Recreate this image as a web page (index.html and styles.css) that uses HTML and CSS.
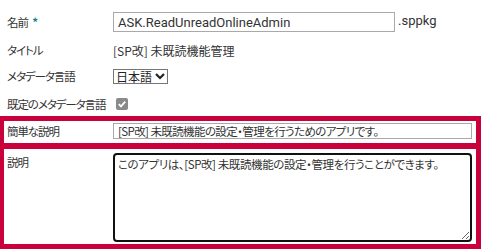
FILE: index.html
```html
<!DOCTYPE html>
<html lang="ja">
<head>
<meta charset="utf-8">
<link rel="stylesheet" href="styles.css">
</head>
<body>
<div class="form">
  <div class="row row-name">
    <div class="label">名前 <span class="req">*</span></div>
    <div class="field">
      <input class="text name-input" type="text" value="ASK.ReadUnreadOnlineAdmin">
      <span class="ext">.sppkg</span>
    </div>
  </div>
  <div class="row row-title">
    <div class="label">タイトル</div>
    <div class="field value">[SP改] 未既読機能管理</div>
  </div>
  <div class="row row-lang">
    <div class="label">メタデータ言語</div>
    <div class="field">
      <span class="select">日本語<svg class="chev" width="10" height="8" viewBox="0 0 10 8"><path d="M1 2 L5 6 L9 2" fill="none" stroke="#222" stroke-width="2.2"/></svg></span>
    </div>
  </div>
  <div class="row row-default">
    <div class="label">既定のメタデータ言語</div>
    <div class="field">
      <svg class="check" width="12" height="12" viewBox="0 0 12 12"><rect x="0" y="0" width="12" height="12" rx="2" fill="#8a8a8a"/><path d="M2.8 6.2 L5 8.4 L9.2 3.6" fill="none" stroke="#fff" stroke-width="1.8"/></svg>
    </div>
  </div>
</div>
<div class="frame">
  <div class="frow frow-short">
    <div class="label">簡単な説明</div>
    <div class="field">
      <input class="text short-input" type="text" value="[SP改] 未既読機能の設定・管理を行うためのアプリです。">
    </div>
  </div>
  <div class="frow frow-desc">
    <div class="label">説明</div>
    <div class="field">
      <textarea class="desc">このアプリは、[SP改] 未既読機能の設定・管理を行うことができます。</textarea>
    </div>
  </div>
</div>
</body>
</html>
```
FILE: styles.css
```css
html, body {
  margin: 0;
  background: #fff;
}
body {
  font-family: "Noto Sans CJK JP", "Noto Sans", sans-serif;
  font-size: 12px;
  color: #333;
  font-feature-settings: "palt" 1;
}
.row {
  display: grid;
  grid-template-columns: 113px 1fr;
  align-items: center;
}
.label {
  padding-left: 7px;
  color: #333;
  white-space: nowrap;
  font-size: 11.5px;
  letter-spacing: -1.1px;
}
.req {
  color: #1c7d8c;
  font-weight: bold;
  margin-left: 3px;
}
.row-name { margin-top: 12px; height: 20px; }
.row-title { margin-top: 8px; height: 20px; }
.row-lang { margin-top: 8px; height: 16px; }
.row-default { margin-top: 12px; height: 14px; }

.field {
  display: flex;
  align-items: center;
}
.text {
  font-family: "Noto Sans CJK JP", sans-serif;
  font-feature-settings: "palt" 1;
  color: #333;
  border: 1px solid #a9a9a9;
  margin: 0;
  padding: 0 4px;
  box-sizing: border-box;
  outline: none;
  background: #fff;
}
.name-input {
  width: 282px;
  height: 20px;
  font-family: Roboto, "Noto Sans CJK JP", sans-serif;
  font-size: 13px;
}
.ext {
  margin-left: 3px;
  font-family: Roboto, "Noto Sans CJK JP", sans-serif;
  font-size: 13px;
  position: relative;
  top: -2px;
}
.value {
  font-size: 12px;
}
.select {
  display: inline-flex;
  align-items: center;
  box-sizing: border-box;
  height: 15px;
  width: 55px;
  border: 1px solid #767676;
  padding: 0 2px;
  font-size: 12px;
  line-height: 13px;
  color: #222;
}
.chev {
  margin-left: 3px;
}
.check {
  margin-left: 3px;
}

.frame {
  margin-top: 6px;
  box-sizing: border-box;
  width: 481px;
  border: 5px solid #c8003c;
  border-left-width: 4px;
}
.frow {
  display: grid;
  grid-template-columns: 109px 1fr;
  align-items: start;
}
.frame .label {
  padding-left: 3px;
}
.frow-short {
  height: 22px;
  box-sizing: border-box;
  padding-top: 2px;
}
.frow-short .label {
  line-height: 16px;
}
.short-input {
  width: 359px;
  height: 16px;
  font-size: 11.5px;
  letter-spacing: -0.6px;
  padding: 0 4px;
}
.frow-desc {
  border-top: 6px solid #c8003c;
  padding-top: 4px;
  padding-bottom: 2px;
}
.frow-desc .label {
  padding-top: 1px;
  line-height: 16px;
}
.desc {
  display: block;
  width: 359px;
  height: 89px;
  margin: 0;
  box-sizing: border-box;
  border: 2px solid #111;
  border-radius: 4px;
  padding: 1px 3px;
  font-family: "Noto Sans CJK JP", sans-serif;
  font-feature-settings: "palt" 1;
  font-size: 11.5px;
  letter-spacing: -0.4px;
  color: #333;
  outline: none;
  resize: both;
  background: #fff;
}
```
